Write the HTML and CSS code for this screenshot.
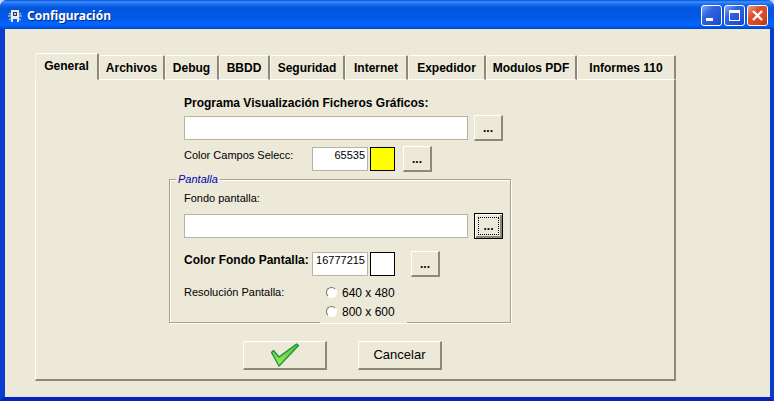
FILE: index.html
```html
<!DOCTYPE html>
<html lang="es">
<head>
<meta charset="utf-8">
<title>Configuración</title>
<link rel="stylesheet" href="styles.css">
</head>
<body>
<div class="window">
  <header class="titlebar">
    <svg class="app-icon" viewBox="0 0 14 14" aria-hidden="true">
      <path d="M1 4l3 2M13 4l-3 2M0 7h3M14 7h-3M1 11l3-2M13 11l-3-2" stroke="#9fc0b4" stroke-width="1.5"/>
      <path d="M3 1h8v12H9V10H5v3H3z" fill="#e6ebee"/>
      <path d="M5 3h4v4H5z" fill="#333b60"/>
      <path d="M6 4h2v2H6z" fill="#b8c8e8"/>
    </svg>
    <h1 class="title">Configuración</h1>
    <div class="window-controls">
      <button class="control" type="button" aria-label="Minimizar"><svg viewBox="0 0 19 19"><path d="M4 12h7v3H4z" fill="#fff"/></svg></button>
      <button class="control" type="button" aria-label="Maximizar"><svg viewBox="0 0 19 19"><path d="M4 4h11v11H4zM5 7v7h9V7z" fill="#fff" fill-rule="evenodd"/></svg></button>
      <button class="control control-close" type="button" aria-label="Cerrar"><svg viewBox="0 0 19 19"><path d="M5 5l9 9M14 5l-9 9" stroke="#fff" stroke-width="2.4"/></svg></button>
    </div>
  </header>
  <main class="content">
    <div class="tabs" role="tablist">
      <button class="tab tab-active" type="button" role="tab" aria-selected="true">General</button>
      <button class="tab" type="button" role="tab">Archivos</button>
      <button class="tab" type="button" role="tab">Debug</button>
      <button class="tab" type="button" role="tab">BBDD</button>
      <button class="tab" type="button" role="tab">Seguridad</button>
      <button class="tab" type="button" role="tab">Internet</button>
      <button class="tab" type="button" role="tab">Expedidor</button>
      <button class="tab" type="button" role="tab">Modulos PDF</button>
      <button class="tab" type="button" role="tab">Informes 110</button>
    </div>
    <form class="panel">
      <div class="form">
        <div class="section">
          <label class="label label-strong" for="viewer">Programa Visualización Ficheros Gráficos:</label>
          <div class="row">
            <input class="field field-path" id="viewer" type="text">
            <button class="button browse" type="button">...</button>
          </div>
          <div class="row">
            <label class="label label-side" for="select-color">Color Campos Selecc:</label>
            <input class="field field-number" id="select-color" type="text" value="65535">
            <span class="swatch swatch-yellow"></span>
            <button class="button browse" type="button">...</button>
          </div>
        </div>
        <fieldset class="group">
          <legend class="legend">Pantalla</legend>
          <label class="label" for="background">Fondo pantalla:</label>
          <div class="row row-background">
            <input class="field field-path" id="background" type="text">
            <button class="button browse browse-focused" type="button">...</button>
          </div>
          <div class="row row-screen">
            <label class="label label-strong label-side" for="screen-color">Color Fondo Pantalla:</label>
            <input class="field field-number" id="screen-color" type="text" value="16777215">
            <span class="swatch"></span>
            <button class="button browse browse-apart" type="button">...</button>
          </div>
          <div class="resolution" role="radiogroup" aria-labelledby="resolution-label">
            <span class="label label-side" id="resolution-label">Resolución Pantalla:</span>
            <div class="options">
              <label class="option"><input class="radio" type="radio" name="resolution">640 x 480</label>
              <label class="option"><input class="radio" type="radio" name="resolution">800 x 600</label>
            </div>
          </div>
        </fieldset>
        <div class="actions">
          <button class="button action" type="submit" aria-label="Aceptar">
            <svg class="check" viewBox="0 0 30 24" aria-hidden="true">
              <defs><linearGradient id="green" x1="0" y1="0" x2="0" y2="1"><stop offset="0" stop-color="#4cc34a"/><stop offset="1" stop-color="#9af05a"/></linearGradient></defs>
              <path d="M1.500 9.500L3.500 7.500L9 14L26.500 1L28.500 2.500L9 23Z" fill="url(#green)" stroke="#259236" stroke-width="1.400" stroke-linejoin="round"/>
            </svg>
          </button>
          <button class="button action" type="button">Cancelar</button>
        </div>
      </div>
    </form>
  </main>
</div>
</body>
</html>
```
FILE: styles.css
```css
* {
  box-sizing: border-box;
}

body {
  margin: 0;
  background: #c9dcf8;
  color: #000;
  font: 11px/14px "Liberation Sans", Arial, sans-serif;
}

button,
input {
  font: inherit;
  color: inherit;
  border-radius: 0;
}

.window {
  display: flex;
  flex-direction: column;
  min-height: 100vh;
  border: solid #0a3cd0;
  border-width: 0 4px 4px 5px;
  border-bottom-color: #0624b4;
  border-radius: 7px 7px 0 0;
  background: #ece9d8;
  box-shadow: inset 0 -1px #dfe8f0;
}

.titlebar {
  display: flex;
  align-items: center;
  height: 29px;
  margin: 0 -4px 0 -5px;
  padding: 2px 6px 0 8px;
  border-radius: 7px 7px 0 0;
  background: linear-gradient(#0a50d8 0, #3c91ff 2px, #1a70f0 4px, #0355dd 8px, #0258e8 18px, #0566ff 24px, #005af0 27px, #0040b8 29px);
}

.app-icon {
  width: 14px;
  height: 14px;
}

.title {
  flex: 1;
  margin: 0 0 0 5px;
  color: #fff;
  font: bold 12px/18px "Noto Sans", sans-serif;
  text-shadow: 1px 1px #0a2a80;
}

.window-controls {
  display: flex;
  gap: 2px;
}

.control {
  width: 21px;
  height: 21px;
  padding: 0;
  border: 1px solid #fff;
  border-radius: 3px;
  background: linear-gradient(135deg, #86a8f5, #3263e0 35%, #2253d8 75%, #1a48c0);
}

.control svg {
  display: block;
}

.control-close {
  background: linear-gradient(135deg, #f0a088, #e05030 35%, #d84520 75%, #b83010);
}

.content {
  flex: 1;
  padding: 24px 94px 14px 30px;
}

.tabs {
  display: grid;
  grid-template-columns: 64fr 66fr 54fr 51fr 75fr 63fr 78fr 91fr 99fr;
  align-items: end;
}

.tab {
  height: 25px;
  padding: 0;
  border: solid;
  border-width: 1px 2px 1px 1px;
  border-color: #fff #8c897a #fff #f8f7ee;
  border-radius: 3px 2px 0 0;
  background: transparent;
  font-weight: bold;
  font-size: 12px;
  white-space: nowrap;
}

.tab-active {
  height: 27px;
  padding-bottom: 2px;
  border-bottom-color: transparent;
}

.panel {
  padding: 16px 0 9px 133px;
  border: solid;
  border-width: 0 2px 2px 1px;
  border-color: #8c897a #8c897a #8c897a #fff;
}

.form {
  max-width: 342px;
}

.section {
  padding: 0 8px 0 15px;
}

.label {
  display: block;
}

.label-strong {
  font-weight: bold;
  font-size: 12px;
}

.label-side {
  align-self: flex-start;
  width: 128px;
  padding-top: 2px;
  white-space: nowrap;
}

.row {
  display: flex;
  align-items: center;
}

.section .row {
  margin-top: 5px;
}

.field {
  height: 24px;
  border: 1px solid #b5b3a5;
  background: #fff;
}

.field-path {
  flex: 1;
  min-width: 0;
  margin-right: 6px;
}

.field-number {
  width: 56px;
  margin-right: 2px;
  padding: 0 2px 8px;
  text-align: right;
}

.swatch {
  width: 25px;
  height: 24px;
  border: 1px solid #000;
  background: #fff;
}

.swatch-yellow {
  background: #ff0;
}

.button {
  border: solid;
  border-width: 1px 2px 2px 1px;
  border-color: #fff #8c897a #8c897a #fff;
  background: #ece9d8;
}

.browse {
  width: 29px;
  height: 26px;
  padding: 0;
  font-weight: bold;
  font-size: 12px;
}

.swatch + .browse {
  margin-left: 8px;
}

.swatch + .browse-apart {
  margin-left: 16px;
}

.browse-focused {
  border: 1px solid #000;
  box-shadow: inset 1px 1px #fff, inset -2px -2px #8c897a;
  outline: 1px dotted #000;
  outline-offset: -5px;
}

.group {
  min-width: 0;
  margin: 0;
  padding: 5px 7px 1px 14px;
  border: 1px solid #a5a294;
  box-shadow: 1px 1px #fff, inset 1px 1px #fff;
}

.legend {
  margin-left: -8px;
  padding: 0 2px;
  background: #ece9d8;
  color: #0000b0;
  font-style: italic;
}

.row-background {
  margin-top: 8px;
}

.row-screen {
  margin-top: 12px;
}

.resolution {
  display: flex;
  margin-top: 6px;
}

/* The options box reaches over the group's lower edge. */
.options {
  min-width: 87px;
  margin: 0 0 -3px 8px;
  padding: 0 0 2px 6px;
  border-bottom: 1px solid #fff;
  background: #ece9d8;
}

.option {
  display: flex;
  align-items: center;
  height: 19px;
  font-size: 12px;
}

.radio {
  appearance: none;
  width: 11px;
  height: 11px;
  margin: 0 5px 0 0;
  border: 1px solid;
  border-color: #77756a #fff #fff #77756a;
  border-radius: 50%;
  background: #fff;
}

.actions {
  display: flex;
  gap: 31px;
  margin-top: 18px;
  padding-left: 74px;
}

.action {
  display: flex;
  align-items: center;
  justify-content: center;
  width: 84px;
  height: 29px;
  padding: 0;
  font-size: 13px;
}

.check {
  width: 30px;
  height: 24px;
}
```
